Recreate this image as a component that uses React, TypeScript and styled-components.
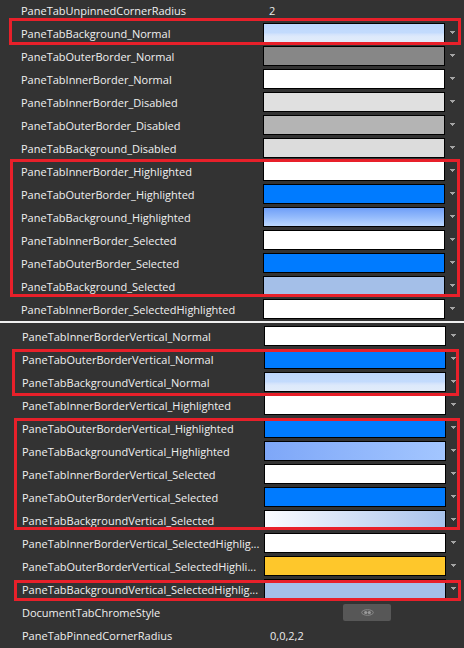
import React from "react";
import styled, { createGlobalStyle } from "styled-components";

const Global = createGlobalStyle`
  html, body { margin: 0; padding: 0; background: #333333; }
  body {
    width: 464px;
    height: 648px;
    overflow: hidden;
    font-family: "Open Sans", "Segoe UI", "Noto Sans", sans-serif;
  }
`;

const Page = styled.div`
  width: 464px;
  height: 648px;
  background: #333333;
  display: flex;
  flex-direction: column;
  overflow: hidden;
`;

const Section = styled.div<{ $top: number }>`
  display: flex;
  flex-direction: column;
  flex-shrink: 0;
  margin-top: ${(p) => p.$top}px;
`;

const Divider = styled.div`
  height: 2px;
  background: #f0f0f0;
  flex-shrink: 0;
`;

const Marked = styled.div<{ $t: number; $b: number; $l: number; $r: number }>`
  position: relative;
  display: flex;
  flex-direction: column;
  &::after {
    content: "";
    position: absolute;
    top: ${(p) => p.$t}px;
    bottom: ${(p) => p.$b}px;
    left: ${(p) => p.$l}px;
    right: ${(p) => p.$r}px;
    border: 3px solid #e8202a;
    pointer-events: none;
    z-index: 2;
  }
`;

const Row = styled.div<{ $indent: number }>`
  display: grid;
  grid-template-columns: 242px 182px 1fr;
  height: 23px;
  padding-left: ${(p) => p.$indent}px;
  align-items: center;
`;

const Label = styled.span`
  color: #f0f0f0;
  font-size: 11px;
  white-space: nowrap;
  overflow: hidden;
`;

const ValueText = styled.span`
  color: #ececec;
  font-size: 11px;
  padding-left: 6px;
`;

const Swatch = styled.div<{ $fill: string }>`
  align-self: start;
  margin-top: 1px;
  height: 20px;
  box-sizing: border-box;
  border: 1px solid #000;
  background: ${(p) => p.$fill};
`;

const ArrowCell = styled.div`
  align-self: start;
  margin-top: 9px;
  padding-left: 5px;
  display: flex;
`;

const ButtonCell = styled.div`
  display: flex;
  align-items: center;
`;

const ChromeButton = styled.button`
  margin-left: 79px;
  width: 48px;
  height: 17px;
  padding: 0;
  border: none;
  border-radius: 2px;
  background: #575757;
  display: flex;
  align-items: center;
  justify-content: center;
`;

const Arrow = () => (
  <svg width="5" height="3" viewBox="0 0 5 3" shapeRendering="crispEdges">
    <rect x="0" y="0" width="5" height="1" fill="#a4a4a4" />
    <rect x="1" y="1" width="3" height="1" fill="#a4a4a4" />
    <rect x="2" y="2" width="1" height="1" fill="#a4a4a4" />
  </svg>
);

const ChromeGlyph = () => (
  <svg width="13" height="7" viewBox="0 0 13 7">
    <ellipse cx="6.5" cy="3.5" rx="5.8" ry="2.8" fill="none" stroke="#8a8a8a" strokeWidth="1" />
    <circle cx="4.7" cy="3.5" r="1.6" fill="#9a9a9a" />
    <circle cx="8.3" cy="3.5" r="1.6" fill="#9a9a9a" />
  </svg>
);

type Item =
  | { name: string; kind: "color"; fill: string }
  | { name: string; kind: "text"; value: string }
  | { name: string; kind: "button" };

const BG_NORMAL =
  "linear-gradient(#bdd7fd 0%, #c3dbfd 48%, #d3e3fc 58%, #dde9fb 70%, #e1ecfa 100%)";
const BG_HIGHLIGHT = "linear-gradient(#6f9ff8 0%, #93bafc 50%, #bcd8ff 100%)";
const BG_SELECTED = "#a4bfe8";
const BLUE = "#007bff";
const WHITE = "#ffffff";

const c = (name: string, fill: string): Item => ({ name, kind: "color", fill });

type Group = { items: Item[]; mark?: { t: number; b: number; l: number; r: number } };

const topGroups: Group[] = [
  { items: [{ name: "PaneTabUnpinnedCornerRadius", kind: "text", value: "2" }] },
  { items: [c("PaneTabBackground_Normal", BG_NORMAL)], mark: { t: -4, b: 0, l: 9, r: 3 } },
  {
    items: [
      c("PaneTabOuterBorder_Normal", "#878787"),
      c("PaneTabInnerBorder_Normal", WHITE),
      c("PaneTabInnerBorder_Disabled", "#e0e0e0"),
      c("PaneTabOuterBorder_Disabled", "#b4b4b4"),
      c("PaneTabBackground_Disabled", "#dcdcdc"),
    ],
  },
  {
    items: [
      c("PaneTabInnerBorder_Highlighted", WHITE),
      c("PaneTabOuterBorder_Highlighted", BLUE),
      c("PaneTabBackground_Highlighted", BG_HIGHLIGHT),
      c("PaneTabInnerBorder_Selected", WHITE),
      c("PaneTabOuterBorder_Selected", BLUE),
      c("PaneTabBackground_Selected", BG_SELECTED),
    ],
    mark: { t: -1, b: 1, l: 10, r: 4 },
  },
  { items: [c("PaneTabInnerBorder_SelectedHighlighted", WHITE)] },
];

const bottomGroups: Group[] = [
  { items: [c("PaneTabInnerBorderVertical_Normal", WHITE)] },
  {
    items: [
      c("PaneTabOuterBorderVertical_Normal", BLUE),
      c("PaneTabBackgroundVertical_Normal", BG_NORMAL),
    ],
    mark: { t: 1, b: -2, l: 12, r: 5 },
  },
  { items: [c("PaneTabInnerBorderVertical_Highlighted", WHITE)] },
  {
    items: [
      c("PaneTabOuterBorderVertical_Highlighted", BLUE),
      c("PaneTabBackgroundVertical_Highlighted", "linear-gradient(to right, #7ea7f8, #a3c6ff)"),
      c("PaneTabInnerBorderVertical_Selected", WHITE),
      c("PaneTabOuterBorderVertical_Selected", BLUE),
      c("PaneTabBackgroundVertical_Selected", "linear-gradient(to right, #fbfcff, #a8c2ec)"),
    ],
    mark: { t: 1, b: 2, l: 14, r: 4 },
  },
  {
    items: [
      c("PaneTabInnerBorderVertical_SelectedHighlig...", WHITE),
      c("PaneTabOuterBorderVertical_SelectedHighli...", "#fec72b"),
    ],
  },
  {
    items: [c("PaneTabBackgroundVertical_SelectedHighlig...", BG_SELECTED)],
    mark: { t: 2, b: 0, l: 14, r: 3 },
  },
  {
    items: [
      { name: "DocumentTabChromeStyle", kind: "button" },
      { name: "PaneTabPinnedCornerRadius", kind: "text", value: "0,0,2,2" },
    ],
  },
];

const PropertyRow = ({ item, indent }: { item: Item; indent: number }) => (
  <Row $indent={indent}>
    <Label>{item.name}</Label>
    {item.kind === "color" && (
      <>
        <Swatch $fill={item.fill} />
        <ArrowCell>
          <Arrow />
        </ArrowCell>
      </>
    )}
    {item.kind === "text" && <ValueText>{item.value}</ValueText>}
    {item.kind === "button" && (
      <ButtonCell>
        <ChromeButton>
          <ChromeGlyph />
        </ChromeButton>
      </ButtonCell>
    )}
  </Row>
);

const GroupView = ({ group, indent }: { group: Group; indent: number }) => {
  const rows = group.items.map((it) => <PropertyRow key={it.name} item={it} indent={indent} />);
  if (group.mark) {
    const m = group.mark;
    return (
      <Marked $t={m.t} $b={m.b} $l={m.l} $r={m.r}>
        {rows}
      </Marked>
    );
  }
  return <>{rows}</>;
};

export default function App() {
  return (
    <>
      <Global />
      <Page>
        <Section $top={-1}>
          {topGroups.map((g, i) => (
            <GroupView key={i} group={g} indent={21} />
          ))}
        </Section>
        <Divider />
        <Section $top={2}>
          {bottomGroups.map((g, i) => (
            <GroupView key={i} group={g} indent={22} />
          ))}
        </Section>
      </Page>
    </>
  );
}
